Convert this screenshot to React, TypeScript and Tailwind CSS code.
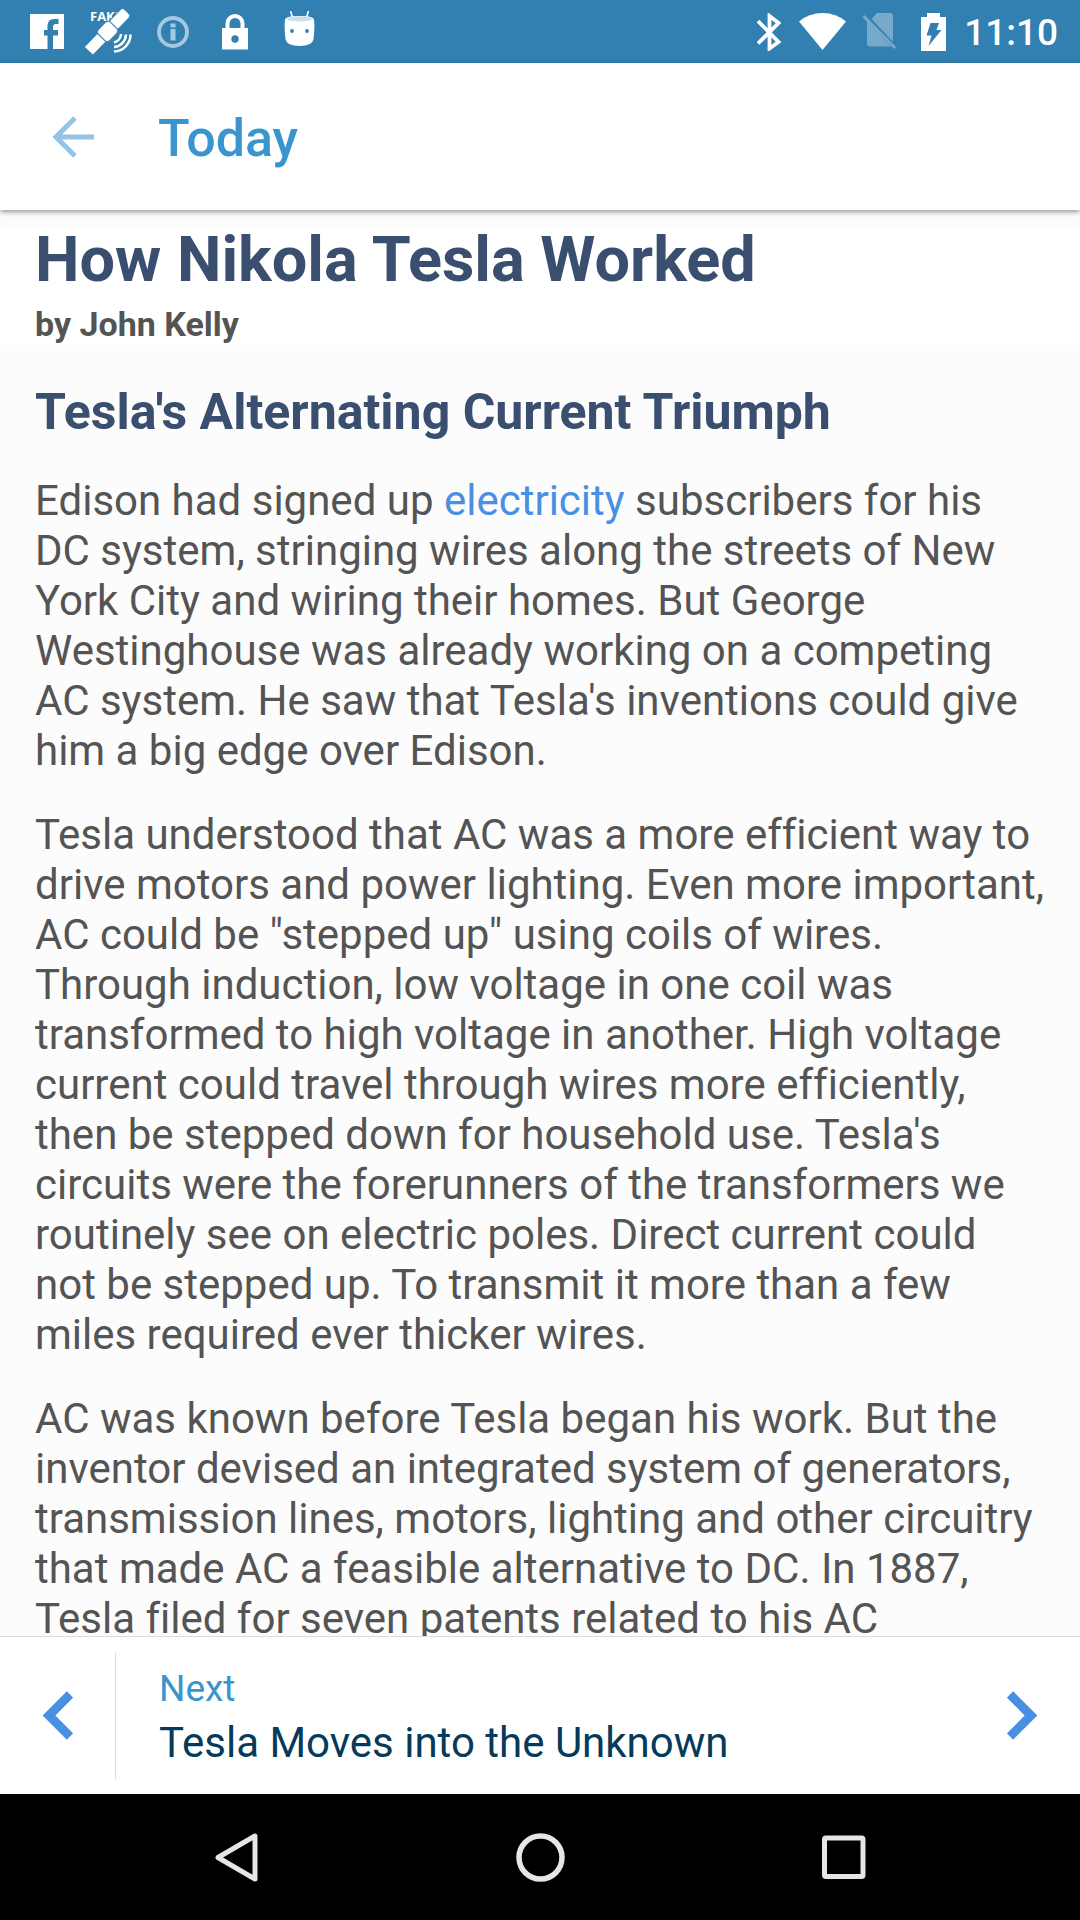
import React from "react";

function FacebookIcon() {
  return (
    <svg width="34" height="35" viewBox="0 0 34 35">
      <path
        fill="#fff"
        d="M0 0H34V35H23V21.500H28V16H23V12.500Q23 10 26 10H28.500V5H24Q17.500 5 17.500 12V16H14V21.500H17.500V35H0Z"
      />
    </svg>
  );
}

function SatelliteIcon() {
  return (
    <svg width="44" height="43" viewBox="0 0 44 43" className="overflow-visible">
      <text x="2" y="11" fill="#fff" fontSize="13" fontWeight="700" fontFamily="Open Sans, sans-serif">
        FAKE
      </text>
      <g transform="rotate(-46 20 21)" stroke="#3280b1" strokeWidth="1">
        <rect x="-8" y="15" width="19" height="12" fill="#fff" />
        <rect x="27" y="15" width="20" height="12" rx="3" fill="#fff" />
        <rect x="11" y="13" width="17" height="16" rx="4" fill="#fff" />
      </g>
      <g fill="none" stroke="#fff" strokeWidth="2.500">
        <path d="M33 24A9 9 0 0 1 26 32.500" />
        <path d="M38 24.500A13 13 0 0 1 26 37" />
        <path d="M42.500 24.500A17 17 0 0 1 26 41.500" />
      </g>
    </svg>
  );
}

function InfoIcon() {
  return (
    <svg width="32" height="32" viewBox="0 0 32 32">
      <circle cx="16" cy="16" r="14" fill="none" stroke="#a5c8e1" strokeWidth="3.800" />
      <path fill="#a5c8e1" d="M13.500 7.500H18.500V11.500H13.500ZM13.500 13H18.500V24.500H13.500Z" />
    </svg>
  );
}

function LockIcon() {
  return (
    <svg width="26" height="36" viewBox="0 0 26 36">
      <path d="M5.500 15V9.500a7.500 7.500 0 0 1 15 0V15" fill="none" stroke="#fff" strokeWidth="4" />
      <path fill="#fff" d="M0 14H26V35.500H0Z" />
      <circle cx="13" cy="25" r="3.700" fill="#3280b1" />
    </svg>
  );
}

function AndroidIcon() {
  return (
    <svg width="31" height="37" viewBox="0 0 31 37">
      <path d="M9 8 6.500 0M22 8 24.500 0" stroke="#fff" strokeWidth="1.600" />
      <path fill="#fff" d="M1 9Q1 5 15.500 5T30 9Q31 16 29.500 28Q28.500 35 15.500 35T1.500 28Q0 16 1 9Z" />
      <ellipse cx="15.500" cy="8" rx="12.500" ry="2.600" fill="#c9dfed" />
      <circle cx="8" cy="20" r="1.900" fill="#3280b1" />
      <circle cx="23" cy="20" r="1.900" fill="#3280b1" />
    </svg>
  );
}

function BluetoothIcon() {
  return (
    <svg width="24" height="38" viewBox="0 0 24 38">
      <path
        d="M1 8 21.500 29 12.500 35.500V3L21.500 10 1 30.500"
        fill="none"
        stroke="#fff"
        strokeWidth="3.800"
      />
    </svg>
  );
}

function WifiIcon() {
  return (
    <svg width="47" height="37" viewBox="0 0 47 37">
      <path fill="#fff" d="M0 8.500Q10 0 23.500 0T47 8.500L23.500 37Z" />
    </svg>
  );
}

function NoSimIcon() {
  return (
    <svg width="35" height="37" viewBox="0 0 35 37">
      <path fill="#77a9cb" d="M15 0H28Q31 0 31 3V29L9.500 6ZM5 8 29 33.500H8Q5 33.500 5 30.500Z" />
      <path d="M1.500 3 33 35" stroke="#77a9cb" strokeWidth="3" />
    </svg>
  );
}

function BatteryIcon() {
  return (
    <svg width="25" height="38" viewBox="0 0 25 38">
      <path fill="#fff" d="M6 0H19V4H25V38H0V4H6Z" />
      <path fill="#3280b1" d="M9.500 10H18L15.500 17H20.500L7.500 33L10.500 22.500H5.500Z" />
    </svg>
  );
}

function StatusBar() {
  return (
    <div className="flex h-[63px] shrink-0 items-center bg-[#3280b1] pl-[30px] pr-[22px] text-white">
      <FacebookIcon />
      <div className="ml-6"><SatelliteIcon /></div>
      <div className="ml-[25px]"><InfoIcon /></div>
      <div className="ml-[33px]"><LockIcon /></div>
      <div className="ml-9 pb-1"><AndroidIcon /></div>
      <div className="ml-auto"><BluetoothIcon /></div>
      <div className="ml-[18px]"><WifiIcon /></div>
      <div className="ml-4"><NoSimIcon /></div>
      <div className="ml-6"><BatteryIcon /></div>
      <time className="ml-[18px] pt-0.5 text-[37px] font-medium leading-[60px]">11:10</time>
    </div>
  );
}

function AppBar() {
  return (
    <header className="relative z-10 flex h-[147px] shrink-0 items-center bg-white pl-[52px] shadow-[0_2px_5px_rgba(0,0,0,0.4)]">
      <button aria-label="Back" className="block">
        <svg width="42" height="42" viewBox="0 0 42 42">
          <path d="M42 21H4M23 2 4 21 23 40" fill="none" stroke="#94c3e4" strokeWidth="5" />
        </svg>
      </button>
      <h1 className="ml-16 pt-1 text-[52px] font-medium leading-[60px] text-[#3a95cf]">Today</h1>
    </header>
  );
}

function Article() {
  return (
    <main className="min-h-0 flex-1 overflow-hidden bg-[#fcfcfc] pt-4 text-[#545454] [font-variant-ligatures:none]">
      <div className="bg-white px-[35px] pb-px">
        <h2 className="text-[63px] font-bold leading-[68px] text-[#3a4f70]">How Nikola Tesla Worked</h2>
        <p className="mt-2.5 text-[34px] font-bold leading-10">by John Kelly</p>
      </div>
      <div className="px-[35px]">
        <h3 className="mt-[38px] text-[50px] font-bold leading-[58px] text-[#3a4f70]">
          Tesla's Alternating Current Triumph
        </h3>
        <div className="mt-[35px] flex flex-col gap-[34px] whitespace-nowrap text-[42px] leading-[50px]">
          <p>
            Edison had signed up{" "}
            <a href="#electricity" className="text-[#4a90e2]">electricity</a> subscribers for his
            <br />
            DC system, stringing wires along the streets of New
            <br />
            York City and wiring their homes. But George
            <br />
            Westinghouse was already working on a competing
            <br />
            AC system. He saw that Tesla's inventions could give
            <br />
            him a big edge over Edison.
          </p>
          <p>
            Tesla understood that AC was a more efficient way to
            <br />
            drive motors and power lighting. Even more important,
            <br />
            AC could be "stepped up" using coils of wires.
            <br />
            Through induction, low voltage in one coil was
            <br />
            transformed to high voltage in another. High voltage
            <br />
            current could travel through wires more efficiently,
            <br />
            then be stepped down for household use. Tesla's
            <br />
            circuits were the forerunners of the transformers we
            <br />
            routinely see on electric poles. Direct current could
            <br />
            not be stepped up. To transmit it more than a few
            <br />
            miles required ever thicker wires.
          </p>
          <p>
            AC was known before Tesla began his work. But the
            <br />
            inventor devised an integrated system of generators,
            <br />
            transmission lines, motors, lighting and other circuitry
            <br />
            that made AC a feasible alternative to DC. In 1887,
            <br />
            Tesla filed for seven patents related to his AC
          </p>
        </div>
      </div>
    </main>
  );
}

function Chevron({ d }: { d: string }) {
  return (
    <svg width="31" height="49" viewBox="0 0 31 49">
      <path d={d} fill="none" stroke="#4a90e2" strokeWidth="9" />
    </svg>
  );
}

function Pager() {
  return (
    <nav className="flex h-[158px] shrink-0 items-center border-t border-[#dcdcdc] bg-white">
      <button
        aria-label="Previous page"
        className="flex h-[126px] w-[116px] items-center border-r border-[#dcdcdc] pl-[42px]"
      >
        <Chevron d="M28 3.500 7 24.500 28 45.500" />
      </button>
      <button className="flex flex-1 items-center pl-[43px] pr-[42px] text-left">
        <span className="flex flex-1 flex-col gap-1 pt-1.5">
          <span className="text-[37px] leading-[44px] text-[#3a95cf]">Next</span>
          <span className="text-[42px] leading-[56px] text-[#063a5b]">Tesla Moves into the Unknown</span>
        </span>
        <Chevron d="M3 3.500 24 24.500 3 45.500" />
      </button>
    </nav>
  );
}

function SystemNav() {
  return (
    <div className="flex h-[126px] shrink-0 items-center justify-center gap-[254px] bg-black">
      <button aria-label="System back" className="block">
        <svg width="50" height="50" viewBox="0 0 50 50">
          <path d="M44 4V47L7 25.500Z" fill="none" stroke="#e6e6e6" strokeWidth="5" strokeLinejoin="round" />
        </svg>
      </button>
      <button aria-label="Home" className="block">
        <svg width="50" height="50" viewBox="0 0 50 50">
          <circle cx="25.500" cy="25.500" r="21.500" fill="none" stroke="#e6e6e6" strokeWidth="5.500" />
        </svg>
      </button>
      <button aria-label="Recent apps" className="block">
        <svg width="50" height="50" viewBox="0 0 50 50">
          <rect x="5.500" y="6" width="38.500" height="38.500" rx="1.500" fill="none" stroke="#e6e6e6" strokeWidth="5" />
        </svg>
      </button>
    </div>
  );
}

export default function App() {
  return (
    <div className="flex h-screen flex-col overflow-hidden font-[Roboto,sans-serif]">
      <StatusBar />
      <AppBar />
      <Article />
      <Pager />
      <SystemNav />
    </div>
  );
}
